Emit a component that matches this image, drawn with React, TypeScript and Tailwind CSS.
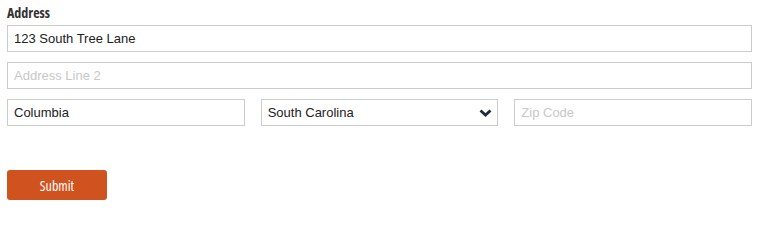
export default function App() {
  return (
    <div className="w-[762px] h-[205px] bg-white pl-[7px] pr-[10px] pt-[4px] font-['Liberation_Sans',Arial,sans-serif]">
      <label className="block text-[14px] leading-[18px] font-bold text-[#333] font-stretch-condensed font-['Open_Sans',sans-serif] mb-[3px]">
        Address
      </label>
      <div className="flex flex-col gap-[10px]">
        <input
          className="h-[27px] w-full border border-[#ccc] px-[6px] text-[13px] text-[#222] outline-none placeholder:text-[#c8c8c8]"
          defaultValue="123 South Tree Lane"
        />
        <input
          className="h-[27px] w-full border border-[#ccc] px-[6px] text-[13px] text-[#222] outline-none placeholder:text-[#c8c8c8]"
          placeholder="Address Line 2"
        />
        <div className="grid grid-cols-3 gap-[16px]">
          <input
            className="h-[27px] w-full border border-[#ccc] px-[6px] text-[13px] text-[#222] outline-none placeholder:text-[#c8c8c8]"
            defaultValue="Columbia"
          />
          <div className="relative">
            <select
              className="h-[27px] w-full appearance-none border border-[#ccc] bg-white px-[6px] text-[13px] text-[#222] outline-none"
              defaultValue="SC"
            >
              <option value="NC">North Carolina</option>
              <option value="SC">South Carolina</option>
              <option value="GA">Georgia</option>
            </select>
            {/* chevron */}
            <svg
              className="pointer-events-none absolute right-[6px] top-[10px]"
              width="13"
              height="8"
              viewBox="0 0 13 8"
            >
              <polyline points="1.5,1.5 6.5,6 11.5,1.5" fill="none" stroke="#1f2a3a" strokeWidth="2.8" />
            </svg>
          </div>
          <input
            className="h-[27px] w-full border border-[#ccc] px-[6px] text-[13px] text-[#222] outline-none placeholder:text-[#c8c8c8]"
            placeholder="Zip Code"
          />
        </div>
      </div>
      <button className="mt-[44px] h-[30px] w-[100px] rounded-[3px] bg-[#d0521e] text-[14px] text-white font-stretch-condensed font-['Open_Sans',sans-serif]">
        Submit
      </button>
    </div>
  );
}
